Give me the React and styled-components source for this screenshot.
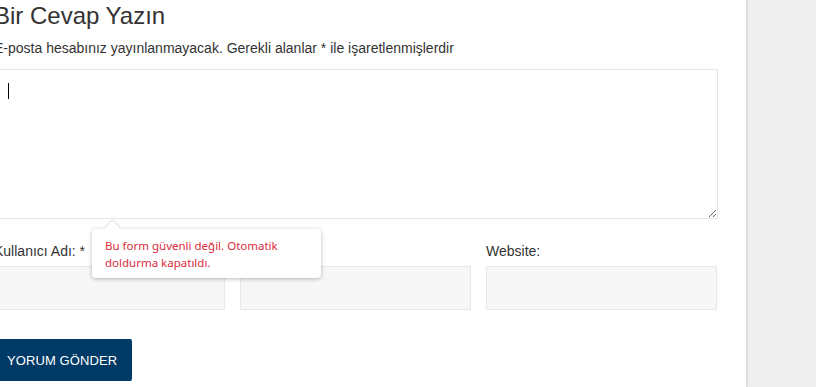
import React from 'react';
import styled, { createGlobalStyle } from 'styled-components';

const GlobalStyle = createGlobalStyle`
  html, body {
    margin: 0;
    padding: 0;
    background: #efefef;
  }
  body {
    font-family: "Liberation Sans", Arial, sans-serif;
    color: #333;
  }
`;

const Page = styled.div`
  width: 746px;
  height: 387px;
  background: #fff;
  box-shadow: 1px 0 3px rgba(0, 0, 0, 0.14);
  overflow: hidden;
`;

const Respond = styled.section`
  width: 724px;
  margin-left: -6px;
  padding-top: 2px;
`;

const Title = styled.h3`
  margin: 0;
  font-size: 24px;
  font-weight: 400;
  line-height: 28px;
  color: #333;
`;

const Notes = styled.p`
  margin: 9px 0 12px;
  font-size: 14px;
  line-height: 18px;
  color: #333;
`;

const CommentWrap = styled.div`
  position: relative;
`;

const CommentBox = styled.textarea`
  display: block;
  box-sizing: border-box;
  width: 100%;
  height: 150px;
  margin: 0;
  padding: 13px 13px;
  border: 1px solid #e6e6e6;
  background: #fff;
  font-family: "Liberation Sans", Arial, sans-serif;
  font-size: 14px;
  line-height: 18px;
  caret-color: #000;
  outline: none;
`;

const Caret = styled.span`
  position: absolute;
  left: 14px;
  top: 14px;
  width: 1px;
  height: 16px;
  background: #000;
  pointer-events: none;
`;

const Fields = styled.div`
  position: relative;
  display: grid;
  grid-template-columns: repeat(3, 231px);
  column-gap: 15px;
  margin-top: 24px;
`;

const Field = styled.label`
  display: flex;
  flex-direction: column;
  gap: 6px;
  font-size: 14px;
  line-height: 17px;
  color: #333;
`;

const Input = styled.input`
  box-sizing: border-box;
  width: 100%;
  height: 44px;
  margin: 0;
  border: 1px solid #e8e8e8;
  background: #f7f7f7;
  outline: none;
`;

const Tooltip = styled.div`
  position: absolute;
  left: 98px;
  top: -14px;
  box-sizing: border-box;
  width: 229px;
  height: 49px;
  padding: 8px 12px 0 13px;
  background: #fff;
  border-radius: 4px;
  box-shadow: 0 1px 4px rgba(0, 0, 0, 0.28);
  font-family: "Noto Sans", "Open Sans", sans-serif;
  font-size: 11.5px;
  line-height: 17px;
  color: #dd2c3c;

  &::before {
    content: "";
    position: absolute;
    left: 15px;
    top: -6px;
    width: 11px;
    height: 11px;
    background: #fff;
    transform: rotate(45deg);
    box-shadow: -1px -1px 2px rgba(0, 0, 0, 0.12);
  }
`;

const TooltipText = styled.span`
  position: relative;
`;

const Submit = styled.button`
  margin-top: 29px;
  height: 42px;
  padding: 0 15px 0 13px;
  border: none;
  border-radius: 2px;
  background: #003a66;
  color: #fff;
  font-family: "Liberation Sans", Arial, sans-serif;
  font-size: 13px;
  letter-spacing: 0.1px;
  cursor: pointer;
`;

export default function App() {
  return (
    <>
      <GlobalStyle />
      <Page>
        <Respond>
          <Title>Bir Cevap Yazın</Title>
          <Notes>E-posta hesabınız yayınlanmayacak. Gerekli alanlar * ile işaretlenmişlerdir</Notes>
          <CommentWrap>
            <CommentBox />
            <Caret />
          </CommentWrap>
          <Fields>
            <Field>
              Kullanıcı Adı: *
              <Input type="text" />
            </Field>
            <Field>
              E-posta: *
              <Input type="email" />
            </Field>
            <Field>
              Website:
              <Input type="url" />
            </Field>
            <Tooltip>
              <TooltipText>Bu form güvenli değil. Otomatik doldurma kapatıldı.</TooltipText>
            </Tooltip>
          </Fields>
          <Submit type="button">YORUM GÖNDER</Submit>
        </Respond>
      </Page>
    </>
  );
}
